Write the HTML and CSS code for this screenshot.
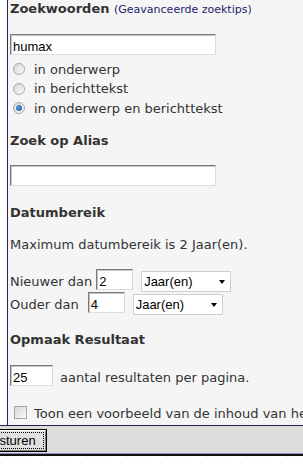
FILE: index.html
```html
<!DOCTYPE html>
<html lang="nl">
<head>
  <meta charset="UTF-8" />
  <title>Zoeken</title>
  <link rel="stylesheet" href="styles.css">
</head>
<body>

<form class="search-form">
  <div class="panel">
    <h3 class="section-title">Zoekwoorden <a class="tips" href="#">(Geavanceerde zoektips)</a></h3>
    <input class="text-input keywords" type="text" value="humax">

    <div class="radio-list">
      <label class="radio-row"><span class="radio"></span>in onderwerp</label>
      <label class="radio-row"><span class="radio"></span>in berichttekst</label>
      <label class="radio-row"><span class="radio checked"></span>in onderwerp en berichttekst</label>
    </div>

    <h3 class="section-title alias-title">Zoek op Alias</h3>
    <input class="text-input alias" type="text" value="">

    <h3 class="section-title date-title">Datumbereik</h3>
    <p class="note">Maximum datumbereik is 2 Jaar(en).</p>

    <div class="date-rows">
      <div class="date-row">
        <span>Nieuwer dan</span>
        <input class="text-input small newer" type="text" value="2">
        <span class="select"><select><option>Jaar(en)</option></select></span>
      </div>
      <div class="date-row">
        <span>Ouder dan</span>
        <input class="text-input small older" type="text" value="4">
        <span class="select"><select><option>Jaar(en)</option></select></span>
      </div>
    </div>

    <h3 class="section-title result-title">Opmaak Resultaat</h3>
    <div class="count-row">
      <input class="text-input count" type="text" value="25">
      <span>aantal resultaten per pagina.</span>
    </div>

    <label class="check-row"><span class="checkbox"></span>Toon een voorbeeld van de inhoud van het bericht</label>
  </div>

  <div class="footer">
    <button class="send" type="button">Versturen</button>
  </div>
  <div class="footer-line"></div>
  <div class="dots"></div>
</form>

</body>
</html>
```

FILE: styles.css
```css
html, body {
  margin: 0;
  overflow: hidden;
  background: #fff;
}

body {
  font-family: "DejaVu Sans", Verdana, sans-serif;
  font-size: 13px;
  color: #333;
}

.panel {
  width: 700px;
  margin-left: 7px;
  padding: 0 0 3px 2px;
  border-left: 1px solid #23235a;
  background: #f5f5f5;
  white-space: nowrap;
}

.section-title {
  margin: 0;
  font-size: 13px;
  font-weight: bold;
  line-height: 18px;
}

.tips {
  font-size: 11px;
  font-weight: normal;
  color: #1c1c6b;
  text-decoration: none;
}

.alias-title { margin-top: 14px; }
.date-title { margin-top: 18px; }
.result-title { margin-top: 18px; }

.text-input {
  display: block;
  box-sizing: border-box;
  height: 21px;
  margin: 0;
  padding: 3px 2px 0;
  border: 1px solid;
  border-color: #7b7b7b #dcdcdc #dcdcdc #7b7b7b;
  box-shadow: inset 1px 1px 0 #c4c4c4;
  background: #fff;
  font: 13px "Liberation Sans", Arial, sans-serif;
  color: #000;
  outline: none;
}

.keywords {
  width: 206px;
  margin-top: 15px;
}

.alias {
  width: 206px;
  margin-top: 15px;
}

.radio-list {
  margin-top: 4.5px;
}

.radio-row {
  display: flex;
  align-items: center;
  height: 19.5px;
}

.radio {
  box-sizing: border-box;
  width: 12px;
  height: 12px;
  margin: 0 9px 0 3px;
  border: 1px solid #a8a8a8;
  border-radius: 50%;
  background: linear-gradient(135deg, #d8d8d8, #fafafa);
  display: flex;
  align-items: center;
  justify-content: center;
}

.radio.checked::before {
  content: "";
  width: 6px;
  height: 6px;
  border-radius: 50%;
  background: radial-gradient(circle at 40% 40%, #5aa0e0, #17508f);
}

.note {
  margin: 14px 0 0;
  line-height: 18px;
}

.date-rows {
  margin-top: 15px;
  display: flex;
  flex-direction: column;
  gap: 2px;
}

.date-row {
  display: flex;
  align-items: baseline;
  height: 21px;
}

.small {
  width: 37px;
}

.newer { margin-left: 4px; }
.older { margin-left: 9px; }

.select {
  position: relative;
  display: inline-block;
  margin-left: 8px;
}

.select select {
  appearance: none;
  -webkit-appearance: none;
  box-sizing: border-box;
  width: 90px;
  height: 21px;
  margin: 0;
  padding: 0 0 0 2px;
  border: 1px solid #cfcfcf;
  border-radius: 0;
  background: #fff;
  font: 13px "Liberation Sans", Arial, sans-serif;
  color: #000;
}

.select::after {
  content: "";
  position: absolute;
  right: 6px;
  top: 9px;
  border-left: 3.5px solid transparent;
  border-right: 3.5px solid transparent;
  border-top: 4px solid #000;
  pointer-events: none;
}

.count-row {
  margin-top: 16px;
  display: flex;
  align-items: baseline;
}

.count {
  width: 43px;
  margin-right: 7px;
}

.check-row {
  margin-top: 18px;
  display: flex;
  align-items: center;
  height: 18px;
}

.checkbox {
  box-sizing: border-box;
  width: 13px;
  height: 13px;
  margin: 0 7px 2px 4px;
  border: 1px solid #a8a8a8;
  background: linear-gradient(135deg, #d4d4d4, #fafafa);
}

.footer {
  border-top: 1px solid #23235a;
  border-bottom: 1px solid #8e8ec4;
  background: #dcdcdc;
  padding: 3px 0 1px;
}

.send {
  display: block;
  box-sizing: border-box;
  height: 23px;
  margin-left: -31px;
  padding: 0 10px;
  border: 1px solid #000;
  background: #e0e0e0;
  box-shadow: inset 1px 1px 0 #fff, inset -1px -1px 0 #808080;
  font: 13px "Liberation Sans", Arial, sans-serif;
  color: #000;
  outline: 1px dotted #000;
  outline-offset: -4px;
}

.footer-line {
  height: 2px;
  background: #111;
}

.dots {
  height: 1px;
  margin-top: 7px;
  background: repeating-linear-gradient(90deg, #e2e2e2 0 1px, transparent 1px 10px);
}
```
